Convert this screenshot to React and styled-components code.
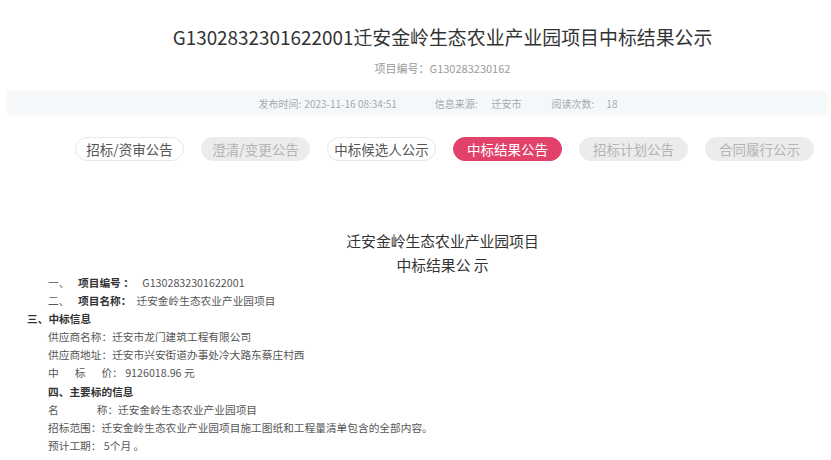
import React from "react";
import styled, { createGlobalStyle } from "styled-components";

const Global = createGlobalStyle`
  html, body { margin: 0; padding: 0; background: #fff; }
  body { font-family: "Noto Sans CJK SC", "Noto Sans", sans-serif; color: #333; }
`;

const Page = styled.div`
  width: 831px;
  height: 460px;
  overflow: hidden;
  padding-top: 23px;
  box-sizing: border-box;
`;

const HeaderCol = styled.div`
  margin-left: 54px;
  display: flex;
  flex-direction: column;
  align-items: center;
`;

const Title = styled.h1`
  margin: 0;
  font-size: 18.9px;
  font-weight: 400;
  line-height: 28px;
  color: #333;
  white-space: nowrap;
`;

const SubNo = styled.div`
  margin-top: 9px;
  font-size: 11px;
  line-height: 16px;
  color: #9a9a9a;
`;

const MetaBar = styled.div`
  margin: 16px 5px 0 8px;
  height: 22px;
  background: #f4f8fb;
  box-shadow: 0 0 4px rgba(0, 0, 0, 0.08);
  display: flex;
  align-items: center;
  justify-content: center;
  padding-left: 42px;
  font-size: 10px;
  color: #a8a8a8;
`;

const MetaItem = styled.span`
  margin-right: ${(p) => p.$gap || 0}px;
  white-space: nowrap;
`;

const MetaValue = styled.span`
  margin-left: ${(p) => p.$pad || 4}px;
`;

const Tabs = styled.div`
  margin: 23px 0 0 75px;
  display: flex;
  gap: 17px;
`;

const Tab = styled.div`
  width: 109px;
  height: 24px;
  box-sizing: border-box;
  border-radius: 12px;
  display: flex;
  align-items: center;
  justify-content: center;
  font-size: 13.5px;
  white-space: nowrap;
  ${(p) =>
    p.$kind === "active"
      ? `background: #e2416a; color: #fff; border: 1px solid #e2416a;`
      : p.$kind === "off"
      ? `background: #ececec; color: #b4b4b4; border: 1px solid #ececec;`
      : `background: #fff; color: #555; border: 1px solid #e6e6e6;`}
`;

const Article = styled.div`
  margin-top: 68px;
`;

const ArtTitle = styled.div`
  margin-left: 54px;
  text-align: center;
  font-size: 14.8px;
  line-height: 24px;
  color: #333;
`;

const Lines = styled.div`
  margin-top: -3px;
  font-size: 10.7px;
  line-height: 18.1px;
  color: #555;
`;

const Line = styled.div`
  padding-left: ${(p) => p.$indent ?? 48}px;
  white-space: nowrap;
  font-weight: ${(p) => (p.$bold ? 700 : 400)};
  color: ${(p) => (p.$bold ? "#333" : "#555")};
`;

const Num = styled.span`
  display: inline-block;
  width: 30px;
`;

const Strong = styled.span`
  font-weight: 700;
  color: #333;
`;

const Val = styled.span`
  margin-left: ${(p) => p.$ml || 0}px;
`;

const Spaced = styled.span`
  letter-spacing: ${(p) => p.$ls}px;
`;

const tabs = [
  { t: "招标/资审公告", k: "normal" },
  { t: "澄清/变更公告", k: "off" },
  { t: "中标候选人公示", k: "normal" },
  { t: "中标结果公告", k: "active" },
  { t: "招标计划公告", k: "off" },
  { t: "合同履行公示", k: "off" },
];

export default function App() {
  return (
    <Page>
      <Global />
      <HeaderCol>
        <Title>G1302832301622001迁安金岭生态农业产业园项目中标结果公示</Title>
        <SubNo>项目编号：G130283230162</SubNo>
      </HeaderCol>
      <MetaBar>
        <MetaItem $gap={38}>
          发布时间:<MetaValue $pad={3}>2023-11-16 08:34:51</MetaValue>
        </MetaItem>
        <MetaItem $gap={30}>
          信息来源:<MetaValue $pad={14}>迁安市</MetaValue>
        </MetaItem>
        <MetaItem>
          阅读次数:<MetaValue $pad={12}>18</MetaValue>
        </MetaItem>
      </MetaBar>
      <Tabs>
        {tabs.map((x) => (
          <Tab key={x.t} $kind={x.k}>
            {x.t}
          </Tab>
        ))}
      </Tabs>
      <Article>
        <ArtTitle>
          迁安金岭生态农业产业园项目
          <br />
          中标结果公 示
        </ArtTitle>
        <Lines>
          <Line>
            <Num>一、</Num>
            <Strong>项目编号 ： </Strong>
            <Val $ml={6}>G1302832301622001</Val>
          </Line>
          <Line>
            <Num>二、</Num>
            <Strong>项目名称：</Strong>
            <Val $ml={5}>迁安金岭生态农业产业园项目</Val>
          </Line>
          <Line $indent={27} $bold>
            三、中标信息
          </Line>
          <Line>供应商名称：迁安市龙门建筑工程有限公司</Line>
          <Line>供应商地址：迁安市兴安街道办事处冷大路东蔡庄村西</Line>
          <Line>
            <Spaced $ls={16}>中标</Spaced>价： 9126018.96 元
          </Line>
          <Line $bold>四、主要标的信息</Line>
          <Line>
            <Spaced $ls={38}>名</Spaced>称：迁安金岭生态农业产业园项目
          </Line>
          <Line>招标范围：迁安金岭生态农业产业园项目施工图纸和工程量清单包含的全部内容。</Line>
          <Line>预计工期： 5个月 。</Line>
        </Lines>
      </Article>
    </Page>
  );
}
